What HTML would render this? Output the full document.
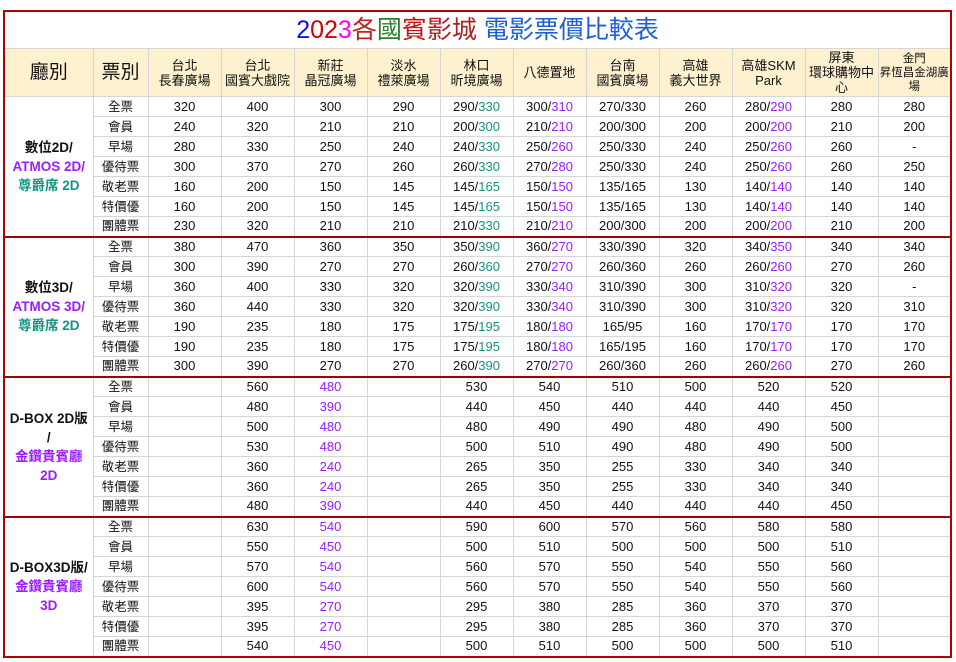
<!DOCTYPE html>
<html><head><meta charset="utf-8">
<style>
*{margin:0;padding:0;box-sizing:border-box}
body{width:956px;height:662px;background:#fff;font-family:"Liberation Sans","Noto Sans CJK TC",sans-serif;color:#111;position:relative;overflow:hidden}
table{position:absolute;left:3px;top:10px;width:949px;border-collapse:collapse;table-layout:fixed;border:2px solid #b00000}
td{border:1px solid #d6d6d6;text-align:center;font-size:13px;height:20px;line-height:18px;white-space:nowrap;overflow:hidden}
td.t{font-size:12.5px}
tr.hd td{background:#fdf1d0;font-size:13px;line-height:15px;height:48px;white-space:normal;padding:0 1px}
tr.hd td.sm{font-size:11.5px;line-height:14px}
tr.hd td.big{font-size:19px}
.title{height:37px;font-size:25px;line-height:36px;border-bottom:1px solid #d6d6d6}
.hall{font-weight:bold;font-size:13.5px;line-height:19px;white-space:normal;border-right:1px solid #d6d6d6}
tr.sep td{border-top:2px solid #a00000}
i{font-style:normal}
.g{color:#139480}.p{color:#9a1cff}
</style></head><body>
<table>
<colgroup><col style="width:89px"><col style="width:55px"><col span="11" style="width:73px"></colgroup>
<tr><td colspan="13" class="title"><span style="color:#1010e0">2</span><span style="color:#d00000">02</span><span style="color:#ff00ff">3</span><span style="color:#c02020">各</span><span style="color:#2e7d32">國</span><span style="color:#c01818">賓</span><span style="color:#b02020">影城</span> <span style="color:#1f5fd0">電影票價比較表</span></td></tr>
<tr class="hd"><td class="big">廳別</td><td class="big">票別</td><td>台北<br>長春廣場</td><td>台北<br>國賓大戲院</td><td>新莊<br>晶冠廣場</td><td>淡水<br>禮萊廣場</td><td>林口<br>昕境廣場</td><td>八德置地</td><td>台南<br>國賓廣場</td><td>高雄<br>義大世界</td><td>高雄SKM<br>Park</td><td>屏東<br>環球購物中心</td><td class="sm">金門<br>昇恆昌金湖廣場</td></tr>

<tr><td rowspan="7" class="hall">數位2D/<br><span class="p">ATMOS 2D/</span><br><span class="g">尊爵席 2D</span></td><td class="t">全票</td><td>320</td><td>400</td><td>300</td><td>290</td><td>290/<i class="g">330</i></td><td>300/<i class="p">310</i></td><td>270/330</td><td>260</td><td>280/<i class="p">290</i></td><td>280</td><td>280</td></tr>
<tr><td class="t">會員</td><td>240</td><td>320</td><td>210</td><td>210</td><td>200/<i class="g">300</i></td><td>210/<i class="p">210</i></td><td>200/300</td><td>200</td><td>200/<i class="p">200</i></td><td>210</td><td>200</td></tr>
<tr><td class="t">早場</td><td>280</td><td>330</td><td>250</td><td>240</td><td>240/<i class="g">330</i></td><td>250/<i class="p">260</i></td><td>250/330</td><td>240</td><td>250/<i class="p">260</i></td><td>260</td><td>-</td></tr>
<tr><td class="t">優待票</td><td>300</td><td>370</td><td>270</td><td>260</td><td>260/<i class="g">330</i></td><td>270/<i class="p">280</i></td><td>250/330</td><td>240</td><td>250/<i class="p">260</i></td><td>260</td><td>250</td></tr>
<tr><td class="t">敬老票</td><td>160</td><td>200</td><td>150</td><td>145</td><td>145/<i class="g">165</i></td><td>150/<i class="p">150</i></td><td>135/165</td><td>130</td><td>140/<i class="p">140</i></td><td>140</td><td>140</td></tr>
<tr><td class="t">特價優</td><td>160</td><td>200</td><td>150</td><td>145</td><td>145/<i class="g">165</i></td><td>150/<i class="p">150</i></td><td>135/165</td><td>130</td><td>140/<i class="p">140</i></td><td>140</td><td>140</td></tr>
<tr><td class="t">團體票</td><td>230</td><td>320</td><td>210</td><td>210</td><td>210/<i class="g">330</i></td><td>210/<i class="p">210</i></td><td>200/300</td><td>200</td><td>200/<i class="p">200</i></td><td>210</td><td>200</td></tr>

<tr class="sep"><td rowspan="7" class="hall">數位3D/<br><span class="p">ATMOS 3D/</span><br><span class="g">尊爵席 2D</span></td><td class="t">全票</td><td>380</td><td>470</td><td>360</td><td>350</td><td>350/<i class="g">390</i></td><td>360/<i class="p">270</i></td><td>330/390</td><td>320</td><td>340/<i class="p">350</i></td><td>340</td><td>340</td></tr>
<tr><td class="t">會員</td><td>300</td><td>390</td><td>270</td><td>270</td><td>260/<i class="g">360</i></td><td>270/<i class="p">270</i></td><td>260/360</td><td>260</td><td>260/<i class="p">260</i></td><td>270</td><td>260</td></tr>
<tr><td class="t">早場</td><td>360</td><td>400</td><td>330</td><td>320</td><td>320/<i class="g">390</i></td><td>330/<i class="p">340</i></td><td>310/390</td><td>300</td><td>310/<i class="p">320</i></td><td>320</td><td>-</td></tr>
<tr><td class="t">優待票</td><td>360</td><td>440</td><td>330</td><td>320</td><td>320/<i class="g">390</i></td><td>330/<i class="p">340</i></td><td>310/390</td><td>300</td><td>310/<i class="p">320</i></td><td>320</td><td>310</td></tr>
<tr><td class="t">敬老票</td><td>190</td><td>235</td><td>180</td><td>175</td><td>175/<i class="g">195</i></td><td>180/<i class="p">180</i></td><td>165/95</td><td>160</td><td>170/<i class="p">170</i></td><td>170</td><td>170</td></tr>
<tr><td class="t">特價優</td><td>190</td><td>235</td><td>180</td><td>175</td><td>175/<i class="g">195</i></td><td>180/<i class="p">180</i></td><td>165/195</td><td>160</td><td>170/<i class="p">170</i></td><td>170</td><td>170</td></tr>
<tr><td class="t">團體票</td><td>300</td><td>390</td><td>270</td><td>270</td><td>260/<i class="g">390</i></td><td>270/<i class="p">270</i></td><td>260/360</td><td>260</td><td>260/<i class="p">260</i></td><td>270</td><td>260</td></tr>

<tr class="sep"><td rowspan="7" class="hall">D-BOX 2D版<br>/<br><span class="p">金鑽貴賓廳<br>2D</span></td><td class="t">全票</td><td></td><td>560</td><td class="p">480</td><td></td><td>530</td><td>540</td><td>510</td><td>500</td><td>520</td><td>520</td><td></td></tr>
<tr><td class="t">會員</td><td></td><td>480</td><td class="p">390</td><td></td><td>440</td><td>450</td><td>440</td><td>440</td><td>440</td><td>450</td><td></td></tr>
<tr><td class="t">早場</td><td></td><td>500</td><td class="p">480</td><td></td><td>480</td><td>490</td><td>490</td><td>480</td><td>490</td><td>500</td><td></td></tr>
<tr><td class="t">優待票</td><td></td><td>530</td><td class="p">480</td><td></td><td>500</td><td>510</td><td>490</td><td>480</td><td>490</td><td>500</td><td></td></tr>
<tr><td class="t">敬老票</td><td></td><td>360</td><td class="p">240</td><td></td><td>265</td><td>350</td><td>255</td><td>330</td><td>340</td><td>340</td><td></td></tr>
<tr><td class="t">特價優</td><td></td><td>360</td><td class="p">240</td><td></td><td>265</td><td>350</td><td>255</td><td>330</td><td>340</td><td>340</td><td></td></tr>
<tr><td class="t">團體票</td><td></td><td>480</td><td class="p">390</td><td></td><td>440</td><td>450</td><td>440</td><td>440</td><td>440</td><td>450</td><td></td></tr>

<tr class="sep"><td rowspan="7" class="hall">D-BOX3D版/<br><span class="p">金鑽貴賓廳<br>3D</span></td><td class="t">全票</td><td></td><td>630</td><td class="p">540</td><td></td><td>590</td><td>600</td><td>570</td><td>560</td><td>580</td><td>580</td><td></td></tr>
<tr><td class="t">會員</td><td></td><td>550</td><td class="p">450</td><td></td><td>500</td><td>510</td><td>500</td><td>500</td><td>500</td><td>510</td><td></td></tr>
<tr><td class="t">早場</td><td></td><td>570</td><td class="p">540</td><td></td><td>560</td><td>570</td><td>550</td><td>540</td><td>550</td><td>560</td><td></td></tr>
<tr><td class="t">優待票</td><td></td><td>600</td><td class="p">540</td><td></td><td>560</td><td>570</td><td>550</td><td>540</td><td>550</td><td>560</td><td></td></tr>
<tr><td class="t">敬老票</td><td></td><td>395</td><td class="p">270</td><td></td><td>295</td><td>380</td><td>285</td><td>360</td><td>370</td><td>370</td><td></td></tr>
<tr><td class="t">特價優</td><td></td><td>395</td><td class="p">270</td><td></td><td>295</td><td>380</td><td>285</td><td>360</td><td>370</td><td>370</td><td></td></tr>
<tr><td class="t">團體票</td><td></td><td>540</td><td class="p">450</td><td></td><td>500</td><td>510</td><td>500</td><td>500</td><td>500</td><td>510</td><td></td></tr>
</table>
</body></html>
